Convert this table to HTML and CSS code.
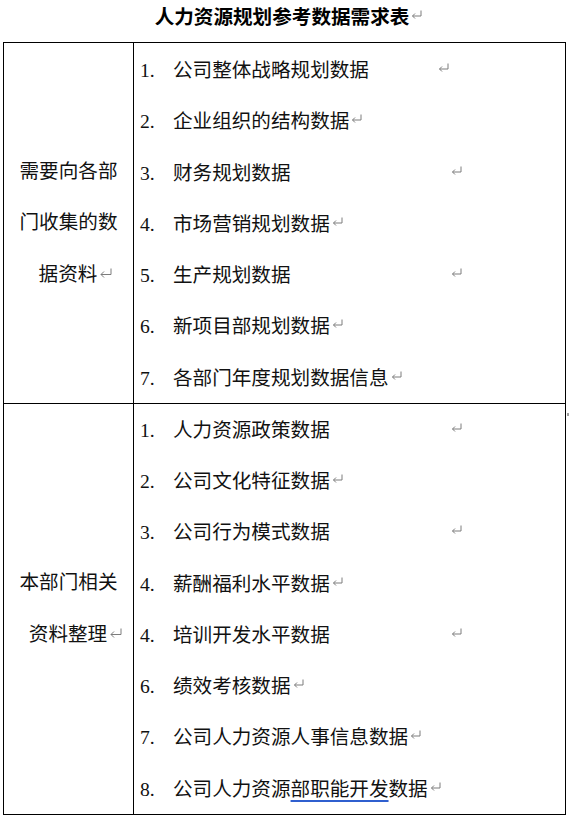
FILE: index.html
```html
<!DOCTYPE html>
<html lang="zh-CN">
<head>
<meta charset="utf-8">
<title>人力资源规划参考数据需求表</title>
<link rel="stylesheet" href="styles.css">
</head>
<body>
<h1 class="title">人力资源规划参考数据需求表<svg class="pm" width="11" height="9" viewBox="0 0 11 9"><path d="M10 0.5V6H1.5M4 3.5L1.5 6L4 8.5"/></svg></h1>
<table class="sheet">
  <tr>
    <td class="label">
      <div class="line">需要向各部</div>
      <div class="line">门收集的数</div>
      <div class="line last">据资料<svg class="pm big" width="13" height="10" viewBox="0 0 13 10"><path d="M12 0.5V6.5H2M5 3.5L2 6.5L5 9.5"/></svg></div>
    </td>
    <td class="items first">
      <div class="item"><span class="tab tab-short"><span class="num">1.</span>公司整体战略规划数据</span><svg class="pm" width="11" height="9" viewBox="0 0 11 9"><path d="M10 0.5V6H1.5M4 3.5L1.5 6L4 8.5"/></svg></div>
      <div class="item"><span class="num">2.</span>企业组织的结构数据<svg class="pm" width="11" height="9" viewBox="0 0 11 9"><path d="M10 0.5V6H1.5M4 3.5L1.5 6L4 8.5"/></svg></div>
      <div class="item"><span class="tab"><span class="num">3.</span>财务规划数据</span><svg class="pm" width="11" height="9" viewBox="0 0 11 9"><path d="M10 0.5V6H1.5M4 3.5L1.5 6L4 8.5"/></svg></div>
      <div class="item"><span class="num">4.</span>市场营销规划数据<svg class="pm" width="11" height="9" viewBox="0 0 11 9"><path d="M10 0.5V6H1.5M4 3.5L1.5 6L4 8.5"/></svg></div>
      <div class="item"><span class="tab"><span class="num">5.</span>生产规划数据</span><svg class="pm" width="11" height="9" viewBox="0 0 11 9"><path d="M10 0.5V6H1.5M4 3.5L1.5 6L4 8.5"/></svg></div>
      <div class="item"><span class="num">6.</span>新项目部规划数据<svg class="pm" width="11" height="9" viewBox="0 0 11 9"><path d="M10 0.5V6H1.5M4 3.5L1.5 6L4 8.5"/></svg></div>
      <div class="item"><span class="num">7.</span>各部门年度规划数据信息<svg class="pm" width="11" height="9" viewBox="0 0 11 9"><path d="M10 0.5V6H1.5M4 3.5L1.5 6L4 8.5"/></svg></div>
    </td>
    <td class="endmark"></td>
  </tr>
  <tr>
    <td class="label">
      <div class="line">本部门相关</div>
      <div class="line last">资料整理<svg class="pm big" width="13" height="10" viewBox="0 0 13 10"><path d="M12 0.5V6.5H2M5 3.5L2 6.5L5 9.5"/></svg></div>
    </td>
    <td class="items">
      <div class="item"><span class="tab"><span class="num">1.</span>人力资源政策数据</span><svg class="pm" width="11" height="9" viewBox="0 0 11 9"><path d="M10 0.5V6H1.5M4 3.5L1.5 6L4 8.5"/></svg></div>
      <div class="item"><span class="num">2.</span>公司文化特征数据<svg class="pm" width="11" height="9" viewBox="0 0 11 9"><path d="M10 0.5V6H1.5M4 3.5L1.5 6L4 8.5"/></svg></div>
      <div class="item"><span class="tab"><span class="num">3.</span>公司行为模式数据</span><svg class="pm" width="11" height="9" viewBox="0 0 11 9"><path d="M10 0.5V6H1.5M4 3.5L1.5 6L4 8.5"/></svg></div>
      <div class="item"><span class="num">4.</span>薪酬福利水平数据<svg class="pm" width="11" height="9" viewBox="0 0 11 9"><path d="M10 0.5V6H1.5M4 3.5L1.5 6L4 8.5"/></svg></div>
      <div class="item"><span class="tab"><span class="num">4.</span>培训开发水平数据</span><svg class="pm" width="11" height="9" viewBox="0 0 11 9"><path d="M10 0.5V6H1.5M4 3.5L1.5 6L4 8.5"/></svg></div>
      <div class="item"><span class="num">6.</span>绩效考核数据<svg class="pm" width="11" height="9" viewBox="0 0 11 9"><path d="M10 0.5V6H1.5M4 3.5L1.5 6L4 8.5"/></svg></div>
      <div class="item"><span class="num">7.</span>公司人力资源人事信息数据<svg class="pm" width="11" height="9" viewBox="0 0 11 9"><path d="M10 0.5V6H1.5M4 3.5L1.5 6L4 8.5"/></svg></div>
      <div class="item"><span class="num">8.</span>公司人力资源<span class="grammar">部职能开发</span>数据<svg class="pm" width="11" height="9" viewBox="0 0 11 9"><path d="M10 0.5V6H1.5M4 3.5L1.5 6L4 8.5"/></svg></div>
    </td>
    <td class="endmark top"><span class="dot"></span></td>
  </tr>
</table>
</body>
</html>
```
FILE: styles.css
```css
html, body {
  margin: 0;
  padding: 0;
  background: #ffffff;
}

body {
  width: 569px;
  height: 818px;
  overflow: hidden;
  font-family: "Liberation Serif", "Noto Sans CJK SC", serif;
  color: #111111;
}

.title {
  margin: 0;
  height: 42px;
  line-height: 36px;
  font-size: 19.6px;
  font-weight: bold;
  text-align: center;
  color: #000000;
  padding-left: 8px;
  box-sizing: border-box;
}

.pm {
  vertical-align: 5px;
  margin-left: 2px;
  fill: none;
  stroke: #7d7d7d;
  stroke-width: 1;
}

.pm.big {
  vertical-align: 3px;
}

.sheet {
  border-collapse: collapse;
  margin-left: 3px;
  width: 564px;
  table-layout: fixed;
}

.sheet td {
  border: 1px solid #000000;
  vertical-align: middle;
  padding: 0;
}

.sheet td.endmark {
  border: none;
  width: 0;
  padding: 0;
}

.sheet td.endmark.top {
  vertical-align: top;
}

.dot {
  display: block;
  margin-top: 10px;
  margin-left: 1px;
  width: 2px;
  height: 3px;
  background: #a0a0a0;
}

.label {
  width: 129px;
  font-size: 19.6px;
  text-align: center;
}

.line {
  height: 51.4px;
  line-height: 52px;
  white-space: nowrap;
}

.line.last {
  padding-left: 14px;
}

.items {
  font-size: 19.6px;
  padding-left: 6px !important;
  white-space: nowrap;
}

.items.first {
  padding-top: 1px !important;
}

.item {
  height: 51.25px;
  line-height: 54px;
}

.num {
  display: inline-block;
  width: 33px;
}

.tab {
  display: inline-block;
  width: 309px;
}

.tab-short {
  width: 296px;
}

.grammar {
  text-decoration: underline;
  text-decoration-color: #2f5fcf;
  text-decoration-thickness: 2px;
  text-underline-offset: 4px;
}
```
